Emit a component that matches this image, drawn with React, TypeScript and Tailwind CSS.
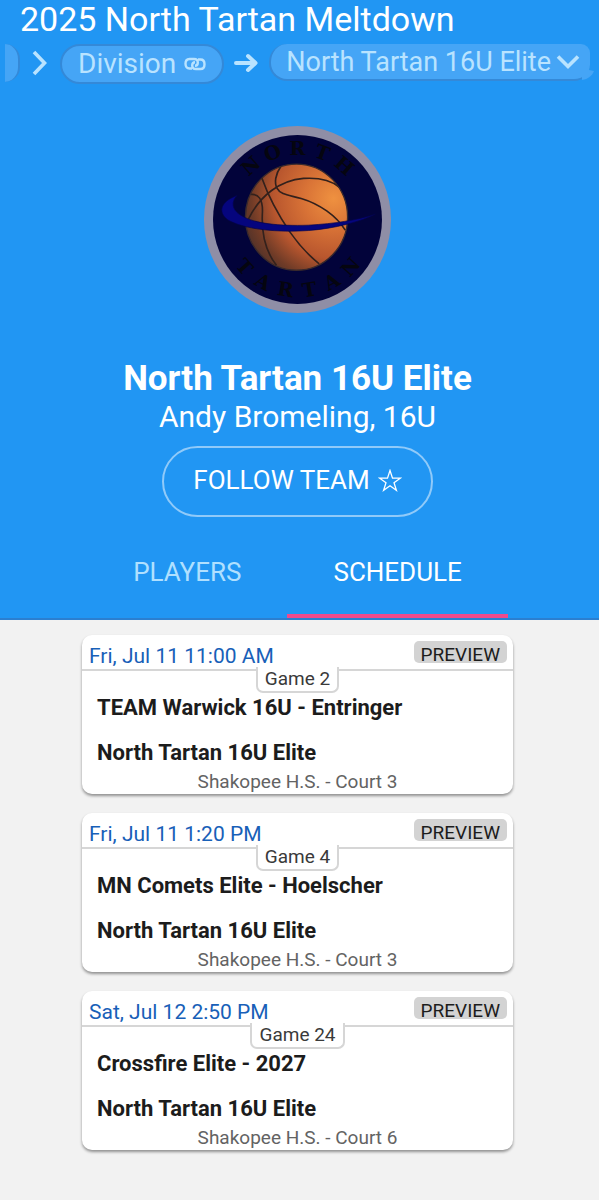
import { ReactNode } from "react";

const games = [
  {
    time: "Fri, Jul 11 11:00 AM",
    label: "Game 2",
    home: "TEAM Warwick 16U - Entringer",
    away: "North Tartan 16U Elite",
    location: "Shakopee H.S. - Court 3",
  },
  {
    time: "Fri, Jul 11 1:20 PM",
    label: "Game 4",
    home: "MN Comets Elite - Hoelscher",
    away: "North Tartan 16U Elite",
    location: "Shakopee H.S. - Court 3",
  },
  {
    time: "Sat, Jul 12 2:50 PM",
    label: "Game 24",
    home: "Crossfire Elite - 2027",
    away: "North Tartan 16U Elite",
    location: "Shakopee H.S. - Court 6",
  },
];

function TeamLogo() {
  return (
    <svg
      viewBox="27 33 560 560"
      className="h-[187px] w-[187px]"
      role="img"
      aria-label="North Tartan logo"
    >
      <defs>
        <radialGradient
          id="ball"
          gradientUnits="userSpaceOnUse"
          cx="415"
          cy="250"
          r="300"
        >
          <stop offset="0" stopColor="#ef9140" />
          <stop offset="0.3" stopColor="#d87236" />
          <stop offset="0.6" stopColor="#b8562e" />
          <stop offset="0.82" stopColor="#6f3b27" />
          <stop offset="1" stopColor="#452e2a" />
        </radialGradient>
        <clipPath id="ballClip">
          <ellipse cx="304" cy="306" rx="153" ry="159" />
        </clipPath>
      </defs>
      <circle cx="307" cy="313" r="280" fill="#8f8ea6" />
      <circle cx="307" cy="313" r="253" fill="#02033a" />
      {/* letters fan out around the centre of the badge */}
      <g
        fill="#05050f"
        fontFamily="'DejaVu Serif', serif"
        fontWeight="bold"
        fontSize="58"
        textAnchor="middle"
      >
        {"NORTH".split("").map((letter, i) => (
          <text
            key={i}
            x="307"
            y="120"
            transform={`rotate(${(i - 2) * 20.5} 307 313)`}
          >
            {letter}
          </text>
        ))}
        {"TARTAN".split("").map((letter, i) => (
          <text
            key={i}
            x="307"
            y="546"
            transform={`rotate(${(2.5 - i) * 19.3} 307 313)`}
          >
            {letter}
          </text>
        ))}
      </g>
      <ellipse
        cx="304"
        cy="306"
        rx="153"
        ry="159"
        fill="url(#ball)"
        stroke="#3a2a2c"
        strokeWidth="4"
      />
      <g
        clipPath="url(#ballClip)"
        fill="none"
        stroke="#33211c"
        strokeWidth="5"
      >
        <path d="M258 153 C240 178 237 204 246 220 C256 240 284 240 318 250 C372 266 424 302 450 345" />
        <path d="M160 312 C195 240 255 196 325 190 C370 187 408 196 432 216" />
        <path d="M200 188 C222 250 250 300 284 350 C312 390 340 420 372 446" />
        <path d="M168 238 C190 236 203 252 202 290 C199 340 204 400 244 450" />
      </g>
      <path
        d="M126 241 C78 258 66 290 98 314 C150 344 250 352 340 346 C420 340 494 320 540 297 C480 316 420 325 340 330 C250 333 180 325 142 303 C112 288 106 262 126 241 Z"
        fill="#05057e"
        stroke="#03034a"
        strokeWidth="2"
      />
    </svg>
  );
}

function LinkIcon() {
  return (
    <svg
      viewBox="0 0 22 14"
      className="h-[14px] w-[22px]"
      fill="none"
      stroke="currentColor"
      strokeWidth="2.4"
    >
      <path d="M8 11.500H5.500C3 11.500 1.500 9.500 1.500 6.800S3 2 5.500 2H10C12.500 2 13.800 3.500 13.800 5.500S12.500 8.800 11 8.800" />
      <path d="M14 2.500H16.500C19 2.500 20.500 4.500 20.500 7.200S19 12 16.500 12H12C9.500 12 8.200 10.500 8.200 8.500S9.500 5.200 11 5.200" />
    </svg>
  );
}

function Tab({ active, children }: { active?: boolean; children: ReactNode }) {
  return (
    <button
      role="tab"
      aria-selected={!!active}
      className={
        active
          ? "h-[74px] border-b-4 border-[#f04a8c] px-[46px] pb-[14px] text-[26px] leading-8 text-white"
          : "h-[74px] border-b-4 border-transparent px-[46px] pb-[14px] text-[26px] leading-8 text-[#b0e0ff]"
      }
    >
      {children}
    </button>
  );
}

function GameCard({ game }: { game: (typeof games)[number] }) {
  return (
    <article className="flex flex-col rounded-[10px] bg-white shadow-[0_2px_3px_rgba(0,0,0,0.4)]">
      <div className="flex h-9 items-start justify-between border-b-2 border-[#d6d6d6] pt-[6px] pr-[6px] pl-[7px]">
        <time className="text-[21px] leading-[30px] text-[#1860b8]">
          {game.time}
        </time>
        <button className="h-[22px] rounded-[5px] bg-[#d3d3d3] px-[7px] text-[19px] leading-7 text-[#1c1c1c]">
          PREVIEW
        </button>
      </div>
      <div className="relative z-10 -mt-1 h-[26px] self-center rounded-b-[7px] border-2 border-t-0 border-[#d6d6d6] bg-white px-[7px] text-[19px] leading-6 text-[#3a3a3a]">
        {game.label}
      </div>
      <h3 className="px-[15px] text-[22px] leading-[30px] font-bold text-[#1c1c1c]">
        {game.home}
      </h3>
      <h3 className="mt-[15px] px-[15px] text-[22px] leading-[30px] font-bold text-[#1c1c1c]">
        {game.away}
      </h3>
      <p className="h-[26px] text-center text-[19px] leading-7 text-[#636363]">
        {game.location}
      </p>
    </article>
  );
}

export default function App() {
  return (
    <div className="min-h-screen bg-[#f2f2f2] font-['Roboto',sans-serif]">
      <header className="border-b-2 border-[#2b7fd0] bg-[#2196f3] text-white">
        <h1 className="pl-5 text-[34px] leading-[38px]">
          2025 North Tartan Meltdown
        </h1>
        <nav className="mx-[5px] mt-[6px] flex h-10 items-start overflow-hidden text-[28px] text-[#b9e3ff]">
          <span className="h-[38px] w-[15px] shrink-0 rounded-r-full border-r-2 border-[#3489d8] bg-[#45a5f6]" />
          <svg
            viewBox="0 0 16 26"
            className="mt-[6px] ml-3 h-[26px] w-4 shrink-0"
            fill="none"
            stroke="currentColor"
            strokeWidth="3.6"
          >
            <path d="M2 2 12.500 13 2 24" />
          </svg>
          <a
            href="#division"
            className="ml-3 flex h-10 shrink-0 items-center gap-2 rounded-full border-2 border-[#3489d8] bg-[#45a5f6] px-4"
          >
            Division
            <LinkIcon />
          </a>
          <svg
            viewBox="0 0 24 20"
            className="mt-[9px] ml-[10px] h-5 w-6 shrink-0"
            fill="none"
            stroke="currentColor"
            strokeWidth="4"
            strokeLinecap="round"
            strokeLinejoin="round"
          >
            <path d="M2 10h19M14 3 21.500 10 14 17" />
          </svg>
          <div className="relative ml-[11px] min-w-0 flex-1 pr-1">
            <select
              aria-label="Team"
              className="block h-[37px] w-full appearance-none rounded-l-[18px] rounded-tr-[9px] rounded-br-[16px] border-b-2 border-l-2 border-[#3489d8] bg-[#45a5f6] pl-[15px] text-[27px] leading-8 outline-none"
            >
              <option>North Tartan 16U Elite</option>
            </select>
            <svg
              viewBox="0 0 24 16"
              className="pointer-events-none absolute top-[10px] right-[14px] h-4 w-6"
              fill="none"
              stroke="currentColor"
              strokeWidth="3.6"
            >
              <path d="M2 2.500 12 12.500 22 2.500" />
            </svg>
            <svg
              viewBox="0 0 12 12"
              className="pointer-events-none absolute right-0 bottom-0 h-3 w-3"
              fill="#45a5f6"
            >
              <path d="M0 1H7L12 2C10 7 6 10 0 11Z" />
            </svg>
          </div>
        </nav>

        <div className="flex flex-col items-center pt-[42px] pr-1">
          <TeamLogo />
          <h2 className="mt-[45px] text-[35px] leading-[41px] font-bold">
            North Tartan 16U Elite
          </h2>
          <p className="text-[30px] leading-9">Andy Bromeling, 16U</p>
          <button className="mt-[11px] flex h-[71px] items-center gap-2 rounded-full border-2 border-[#90caf9] px-[29px] pb-[2px] text-[26px]">
            FOLLOW TEAM
            <svg
              viewBox="0 0 24 24"
              className="h-6 w-6"
              fill="none"
              stroke="currentColor"
              strokeWidth="1.3"
            >
              <path d="M12 1.500 14.500 9.200H22.300L16 13.800 18.400 21.400 12 16.800 5.600 21.400 8 13.800 1.700 9.200H9.500Z" />
            </svg>
          </button>
          <div role="tablist" className="mt-[27px] flex">
            <Tab>PLAYERS</Tab>
            <Tab active>SCHEDULE</Tab>
          </div>
        </div>
      </header>

      <main className="flex flex-col items-center pt-[15px] pr-1 pb-12">
        <div className="flex w-full max-w-[431px] flex-col gap-[19px]">
          {games.map((game) => (
            <GameCard key={game.label} game={game} />
          ))}
        </div>
      </main>
    </div>
  );
}
